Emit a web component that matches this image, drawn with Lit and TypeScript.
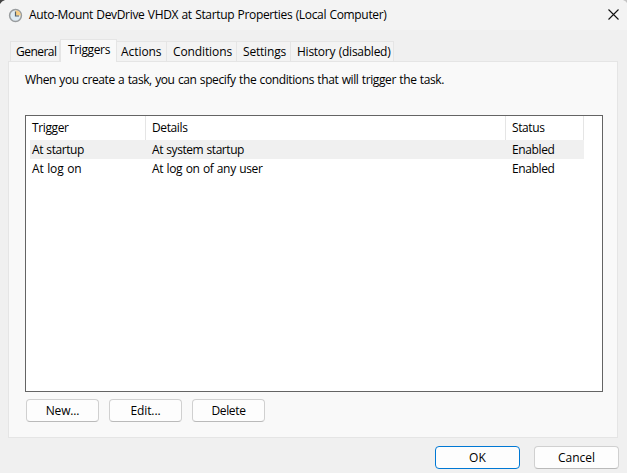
import { LitElement, html, css } from "lit";
import { customElement, property } from "lit/decorators.js";

/** A text label whose tracking is adjusted so that it fills `w` pixels. */
@customElement("fit-label")
class FitLabel extends LitElement {
  @property() text = "";
  @property({ type: Number }) w = 0;

  static styles = css`
    :host { display: inline-block; white-space: pre; flex: none; }
    .t { display: inline-block; word-spacing: 0.6px; }
  `;

  firstUpdated() {
    const t = this.renderRoot.querySelector(".t") as HTMLElement;
    const natural = t.getBoundingClientRect().width;
    t.style.letterSpacing = `${(this.w - natural) / this.text.length}px`;
  }

  render() {
    return html`<span class="t">${this.text}</span>`;
  }
}

const label = (text: string, w: number) => html`<fit-label .text=${text} .w=${w}></fit-label>`;

@customElement("app-root")
class AppRoot extends LitElement {
  static styles = css`
    * { box-sizing: border-box; }
    :host {
      display: flex; flex-direction: column; width: 627px; height: 473px;
      background: #f0f0f0; overflow: hidden; color: #000;
      font: 12px/16px "Open Sans", "Noto Sans", sans-serif;
    }
    .title { display: flex; align-items: center; height: 30px; flex: none; background: #f3f3f3; padding: 0 8px 0 8px; position: relative; }
    .title .clock { width: 15px; height: 15px; margin-right: 6px; }
    .title .close { margin-left: auto; width: 11px; height: 11px; margin-top: -1px; }
    .corner { position: absolute; top: 0; width: 5px; height: 5px; }
    .left { left: 0; }
    .right { right: 0; }
    .tabs { display: flex; align-items: flex-end; height: 32px; flex: none; margin-left: 10px; margin-bottom: -1px; position: relative; z-index: 1; }
    .tab { height: 21px; border: 1px solid #e5e5e5; border-left-width: 0; background: #f3f3f3; padding: 2px 0 0 5px; }
    .tab.first { border-left-width: 1px; }
    .tab.active { height: 23px; border-left-width: 1px; border-bottom: 0; background: #f9f9f9; padding: 2px 0 0 7px; }
    .w0 { width: 50px; } .w1 { width: 57px; } .w2 { width: 50px; padding-left: 4px; } .w3 { width: 70px; padding-left: 6px; }
    .w4 { width: 54px; padding-left: 6px; } .w5 { width: 103px; padding-left: 6px; }
    .panel { width: 610px; height: 377px; flex: none; margin-left: 8px; border: 1px solid #e5e5e5; background: #f9f9f9; padding: 10px 14px 0 16px; }
    .intro { height: 43px; }
    .list { width: 578px; height: 277px; border: 1px solid #646464; background: #fff; padding-left: 4px; }
    .row { display: grid; grid-template-columns: 120px 360px 74px; width: 554px; height: 19px; }
    .row > div { padding: 2px 0 0 2px; height: 19px; }
    .row.head { grid-template-columns: 116px 360px 78px; height: 24px; }
    .head > div { border-right: 1px solid #e5e5e5; height: 24px; padding: 4px 0 0 6px; }
    .head > div:first-child { padding-left: 2px; }
    .selected { background: #f0f0f0; }
    .buttons { display: flex; gap: 10px; margin: 7px 0 0 1px; }
    button {
      font: inherit; color: inherit; width: 73px; height: 23px; padding: 1px 0 0; display: flex;
      align-items: center; justify-content: center; border: 1px solid #d0d0d0; border-bottom-color: #bababa;
      border-radius: 4px; background: #fdfdfd;
    }
    .footer { display: flex; justify-content: flex-end; gap: 14px; padding: 8px 8px 0 0; }
    .footer button { width: 85px; }
    .footer .primary { border-color: #0078d4; }
  `;

  render() {
    const tabs: [string, number][] = [
      ["General", 40.5], ["Triggers", 42], ["Actions", 40.5], ["Conditions", 59], ["Settings", 43], ["History (disabled)", 93.5],
    ];
    return html`
      <div class="title">
        <svg class="corner left" viewBox="0 0 5 5"><path d="M0 0H5Q1.5 .8 0 4Z" fill="#444" /></svg>
        <svg class="corner right" viewBox="0 0 5 5"><path d="M1 0H5V3Q4 1 1 0Z" fill="#c4c4c4" /></svg>
        <svg class="clock" viewBox="0 0 15 15">
          <circle cx="7.5" cy="7.5" r="5.9" fill="#dfebf3" stroke="#999c9e" stroke-width="1.5" />
          <path d="M7.5 7.5V2.2A5.3 5.3 0 0 1 12.8 7.5Z" fill="#f8ce83" />
          <path d="M7.5 3.5V8H11" fill="none" stroke="#53616c" stroke-width="1.2" />
        </svg>
        ${label("Auto-Mount DevDrive VHDX at Startup Properties (Local Computer)", 357.5)}
        <svg class="close" viewBox="0 0 11 11"><path d="M.5 .5L10.5 10.5M10.5 .5L.5 10.5" stroke="#111" stroke-width="1.1" /></svg>
      </div>
      <div class="tabs">
        ${tabs.map(([t, w], i) => html`<div class="tab w${i} ${i === 0 ? "first" : i === 1 ? "active" : ""}">${label(t, w)}</div>`)}
      </div>
      <div class="panel">
        <div class="intro">${label("When you create a task, you can specify the conditions that will trigger the task.", 419)}</div>
        <div class="list">
          <div class="row head"><div>${label("Trigger", 36.5)}</div><div>${label("Details", 35.5)}</div><div>${label("Status", 32.5)}</div></div>
          <div class="row selected"><div>${label("At startup", 52)}</div><div>${label("At system startup", 92)}</div><div>${label("Enabled", 42.5)}</div></div>
          <div class="row"><div>${label("At log on", 49.5)}</div><div>${label("At log on of any user", 110.5)}</div><div>${label("Enabled", 42.5)}</div></div>
        </div>
        <div class="buttons">
          <button>${label("New...", 33.5)}</button><button>${label("Edit...", 30)}</button><button>${label("Delete", 34)}</button>
        </div>
      </div>
      <div class="footer">
        <button class="primary">${label("OK", 17)}</button><button>${label("Cancel", 37)}</button>
      </div>
    `;
  }
}
